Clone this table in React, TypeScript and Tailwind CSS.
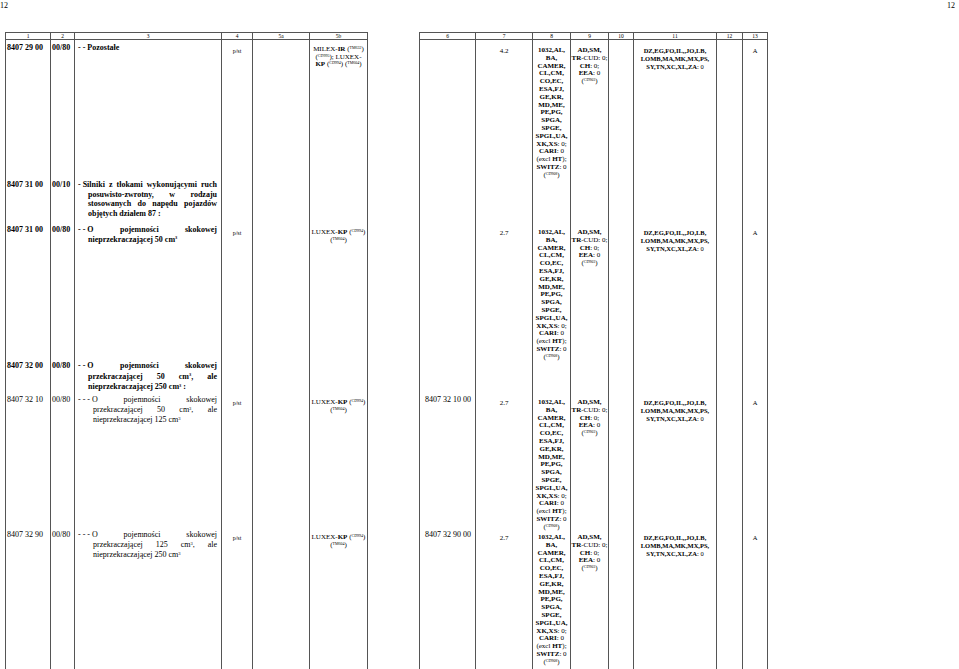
import React from "react";

const GRID =
  "grid grid-cols-[46px_24px_147px_31px_57px_58px_51px_57px_57px_38px_38px_25px_83px_26px_25px]";

// border per column: left block, spacer, right block
const EDGE = [
  "border-x",
  "border-r",
  "border-r",
  "border-r",
  "border-r",
  "border-r",
  "",
  "border-x",
  "border-r",
  "border-r",
  "border-r",
  "border-r",
  "border-r",
  "border-r",
  "border-r",
];

const HEAD = ["1", "2", "3", "4", "5a", "5b", "", "6", "7", "8", "9", "10", "11", "12", "13"];

const Sup = ({ children }: { children: React.ReactNode }) => (
  <>
    (<sup className="text-[4px] leading-none">{children}</sup>)
  </>
);

const Cube = () => <sup className="text-[4.5px] leading-none">3</sup>;

// dashes at the head of a description stay tight when the line is justified
const Dash = ({ children }: { children: React.ReactNode }) => (
  <span className="inline-block whitespace-pre">{children}</span>
);

// a line of justified text that keeps its own break
const Line = ({ children, last, indent }: { children: React.ReactNode; last?: boolean; indent?: string }) => (
  <div className={`${indent ?? ""} ${last ? "" : "[text-align-last:justify] text-justify"}`}>{children}</div>
);

function Description({ lines, indent }: { lines: React.ReactNode[]; indent: string }) {
  return (
    <>
      {lines.map((l, i) => (
        <Line key={i} last={i === lines.length - 1} indent={i === 0 ? "" : indent}>
          {l}
        </Line>
      ))}
    </>
  );
}

function Origin() {
  return (
    <div className="text-center text-[7px] leading-[7.8px] pt-[4px]">
      <div><b>1032,AL,</b></div>
      <div><b>BA,</b></div>
      <div><b>CAMER,</b></div>
      <div><b>CL,CM,</b></div>
      <div><b>CO,EC,</b></div>
      <div><b>ESA,FJ,</b></div>
      <div><b>GE,KR,</b></div>
      <div><b>MD,ME,</b></div>
      <div><b>PE,PG,</b></div>
      <div><b>SPGA,</b></div>
      <div><b>SPGE,</b></div>
      <div><b>SPGL,UA,</b></div>
      <div><b>XK,XS</b>: 0;</div>
      <div><b>CARI</b>: 0</div>
      <div>(excl <b>HT</b>);</div>
      <div><b>SWITZ</b>: 0</div>
      <div><Sup>CD908</Sup></div>
    </div>
  );
}

function Nine() {
  return (
    <div className="text-center text-[7px] leading-[7.8px] pt-[4px] whitespace-nowrap">
      <div><b>AD,SM,</b></div>
      <div><b>TR</b>-CUD: 0;</div>
      <div><b>CH</b>: 0;</div>
      <div><b>EEA</b>: 0</div>
      <div><Sup>CD903</Sup></div>
    </div>
  );
}

function Eleven() {
  return (
    <div className="text-center text-[6.5px] leading-[8px] pt-[4px] whitespace-nowrap">
      <div><b>DZ,EG,FO,IL,,JO,LB,</b></div>
      <div><b>LOMB,MA,MK,MX,PS,</b></div>
      <div><b>SY,TN,XC,XL,ZA</b>: 0</div>
    </div>
  );
}

const Luxex = () => (
  <div className="text-center text-[7px] leading-[7.5px] pt-[4px] whitespace-nowrap">
    <div>
      LUXEX-<b>KP</b> <Sup>CD994</Sup>
    </div>
    <div>
      <Sup>TM604</Sup>
    </div>
  </div>
);

type Row = {
  h: string;
  cells: React.ReactNode[];
};

const unit = <div className="text-center text-[6px] pt-[4px] leading-[8px]">p/st</div>;
const rate = (v: string) => <div className="text-center text-[7px] pt-[4px] leading-[8px]">{v}</div>;
const letterA = <div className="text-center text-[6.5px] pt-[4px] leading-[8px]">A</div>;

const rows: Row[] = [
  {
    h: "h-[137px]",
    cells: [
      <b>8407 29 00</b>,
      <b>00/80</b>,
      <div className="pl-[3px]"><b>- - Pozostałe</b></div>,
      unit,
      null,
      <div className="text-center text-[7px] leading-[7.5px] pt-[3px] whitespace-nowrap">
        <div>MILEX-<b>IR</b> <Sup>TM632</Sup></div>
        <div><Sup>CD995</Sup>; LUXEX-</div>
        <div><b>KP</b> <Sup>CD994</Sup> <Sup>TM604</Sup></div>
      </div>,
      null,
      null,
      rate("4.2"),
      <Origin />,
      <Nine />,
      null,
      <Eleven />,
      null,
      letterA,
    ],
  },
  {
    h: "h-[45px]",
    cells: [
      <b>8407 31 00</b>,
      <b>00/10</b>,
      <div className="pl-[3px] pr-[4px] font-bold">
        <Description
          indent="pl-[10px]"
          lines={[
            <><Dash>- </Dash>Silniki z tłokami wykonującymi ruch</>,
            "posuwisto-zwrotny, w rodzaju",
            "stosowanych do napędu pojazdów",
            "objętych działem 87 :",
          ]}
        />
      </div>,
      null, null, null, null, null, null, null, null, null, null, null, null,
    ],
  },
  {
    h: "h-[136px]",
    cells: [
      <b>8407 31 00</b>,
      <b>00/80</b>,
      <div className="pl-[3px] pr-[4px] font-bold">
        <Description
          indent="pl-[10px]"
          lines={[
            <><Dash>- - O</Dash> pojemności skokowej</>,
            <>nieprzekraczającej 50 cm<Cube /></>,
          ]}
        />
      </div>,
      unit,
      null,
      <Luxex />,
      null,
      null,
      rate("2.7"),
      <Origin />,
      <Nine />,
      null,
      <Eleven />,
      null,
      letterA,
    ],
  },
  {
    h: "h-[34px]",
    cells: [
      <b>8407 32 00</b>,
      <b>00/80</b>,
      <div className="pl-[3px] pr-[4px] font-bold leading-[10.5px]">
        <Description
          indent="pl-[10px]"
          lines={[
            <><Dash>- - O</Dash> pojemności skokowej</>,
            <>przekraczającej 50 cm<Cube />, ale</>,
            <>nieprzekraczającej 250 cm<Cube /> :</>,
          ]}
        />
      </div>,
      null, null, null, null, null, null, null, null, null, null, null, null,
    ],
  },
  {
    h: "h-[135px]",
    cells: [
      "8407 32 10",
      "00/80",
      <div className="pl-[3px] pr-[4px] leading-[10px]">
        <Description
          indent="pl-[15px]"
          lines={[
            <><Dash>- - - O</Dash> pojemności skokowej</>,
            <>przekraczającej 50 cm<Cube />, ale</>,
            <>nieprzekraczającej 125 cm<Cube /></>,
          ]}
        />
      </div>,
      unit,
      null,
      <Luxex />,
      null,
      <div className="pl-[5px]">8407 32 10 00</div>,
      rate("2.7"),
      <Origin />,
      <Nine />,
      null,
      <Eleven />,
      null,
      letterA,
    ],
  },
  {
    h: "h-[160px]",
    cells: [
      "8407 32 90",
      "00/80",
      <div className="pl-[3px] pr-[4px] leading-[10px]">
        <Description
          indent="pl-[15px]"
          lines={[
            <><Dash>- - - O</Dash> pojemności skokowej</>,
            <>przekraczającej 125 cm<Cube />, ale</>,
            <>nieprzekraczającej 250 cm<Cube /></>,
          ]}
        />
      </div>,
      unit,
      null,
      <Luxex />,
      null,
      <div className="pl-[5px]">8407 32 90 00</div>,
      rate("2.7"),
      <Origin />,
      <Nine />,
      null,
      <Eleven />,
      null,
      letterA,
    ],
  },
];

export default function App() {
  return (
    <div className="w-[959px] h-[669px] overflow-hidden bg-white text-black font-['Liberation_Serif',serif] text-[8px] leading-[9.6px]">
      <div className="flex justify-between h-[32px] pr-[4px] pt-[1px] text-[8px] leading-[10px]">
        <span>12</span>
        <span>12</span>
      </div>
      <div className="pl-[5px]">
        <div className={`${GRID} h-[8px]`}>
          {HEAD.map((t, i) => (
            <div
              key={i}
              className={`${EDGE[i]} ${i === 6 ? "" : "border-y"} border-[#555] text-center text-[5.5px] leading-[6px]`}
            >
              {t}
            </div>
          ))}
        </div>
        {rows.map((r, ri) => (
          <div key={ri} className={`${GRID} ${r.h}`}>
            {r.cells.map((c, ci) => (
              <div key={ci} className={`${EDGE[ci]} border-[#555] pt-[3px] ${ci < 2 ? "pl-[1px] whitespace-nowrap" : ""}`}>
                {c}
              </div>
            ))}
          </div>
        ))}
      </div>
    </div>
  );
}
